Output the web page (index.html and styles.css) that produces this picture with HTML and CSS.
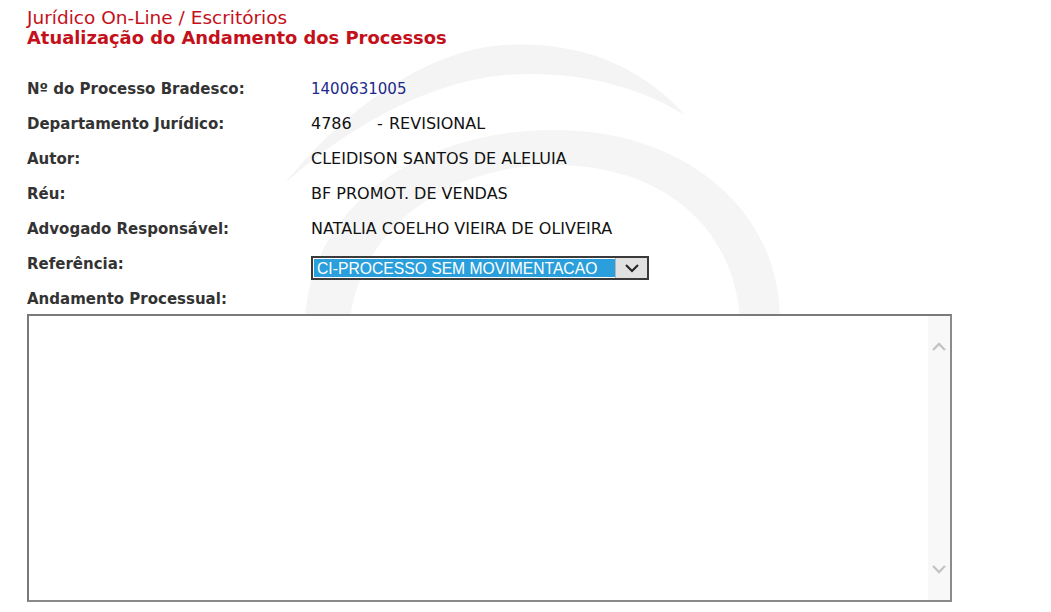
FILE: index.html
```html
<!DOCTYPE html>
<html lang="pt-BR">
<head>
<meta charset="utf-8">
<title>Atualização do Andamento dos Processos</title>
<link rel="stylesheet" href="styles.css">
</head>
<body>
<div class="page">
  <svg class="watermark" width="520" height="300" viewBox="0 0 520 300" aria-hidden="true">
    <path d="M0 153 C 60 80, 140 20, 220 15 C 300 10, 360 40, 400 85 C 350 55, 290 40, 220 45 C 140 52, 60 100, 0 153 Z" fill="#f4f4f4"/>
    <path d="M20 290 C 25 180, 130 100, 270 100 C 400 100, 495 180, 495 290 L 455 290 C 450 200, 380 135, 270 135 C 160 135, 75 200, 65 290 Z" fill="#f5f5f5"/>
  </svg>
  <header class="titles">
    <div class="crumb">Jurídico On-Line / Escritórios</div>
    <h1 class="title">Atualização do Andamento dos Processos</h1>
  </header>
  <div class="form">
    <div class="label">Nº do Processo Bradesco:</div>
    <div class="value value-blue">1400631005</div>
    <div class="label">Departamento Jurídico:</div>
    <div class="value"><span class="code">4786</span><span class="dash">-</span>REVISIONAL</div>
    <div class="label">Autor:</div>
    <div class="value">CLEIDISON SANTOS DE ALELUIA</div>
    <div class="label">Réu:</div>
    <div class="value">BF PROMOT. DE VENDAS</div>
    <div class="label">Advogado Responsável:</div>
    <div class="value">NATALIA COELHO VIEIRA DE OLIVEIRA</div>
    <div class="label">Referência:</div>
    <div class="value">
      <div class="select">
        <span class="select-text">CI-PROCESSO SEM MOVIMENTACAO</span>
        <span class="select-btn">
          <svg width="16" height="10" viewBox="0 0 16 10"><path d="M2 2 L8 8 L14 2" fill="none" stroke="#222" stroke-width="2"/></svg>
        </span>
      </div>
    </div>
    <div class="label label-wide">Andamento Processual:</div>
  </div>
  <div class="textarea">
    <div class="textarea-body"></div>
    <div class="scrollbar">
      <svg width="16" height="10" viewBox="0 0 16 10"><path d="M2 8 L8 2 L14 8" fill="none" stroke="#c4c4c4" stroke-width="2.4"/></svg>
      <svg width="16" height="10" viewBox="0 0 16 10"><path d="M2 2 L8 8 L14 2" fill="none" stroke="#c4c4c4" stroke-width="2.4"/></svg>
    </div>
  </div>
</div>
</body>
</html>
```
FILE: styles.css
```css
html, body {
  margin: 0;
  padding: 0;
  background: #fff;
}
.page {
  position: relative;
  width: 1051px;
  height: 612px;
  overflow: hidden;
  padding: 8px 0 0 27px;
  box-sizing: border-box;
  font-family: "DejaVu Sans", Verdana, sans-serif;
}
.watermark {
  position: absolute;
  left: 285px;
  top: 30px;
  z-index: 0;
}
.titles, .form, .textarea {
  position: relative;
  z-index: 1;
}
.crumb {
  color: #c4101a;
  font-size: 18.5px;
  line-height: 20px;
}
.title {
  margin: 0;
  color: #c4101a;
  font-size: 17.9px;
  font-weight: bold;
  line-height: 20px;
}
.form {
  margin-top: 23px;
  display: grid;
  grid-template-columns: 284px auto;
  grid-auto-rows: 35px;
  align-items: center;
}
.label {
  font-weight: bold;
  font-size: 15px;
  color: #333;
}
.label-wide {
  grid-column: 1 / 3;
}
.value {
  font-size: 16px;
  color: #111;
}
.value-blue {
  color: #1d2a8c;
  font-size: 15px;
}
.code {
  display: inline-block;
  width: 66px;
}
.dash {
  display: inline-block;
  width: 12px;
}
.select {
  display: flex;
  width: 338px;
  height: 24px;
  margin-top: 8px;
  box-sizing: border-box;
  border: 2px solid #3a3a3a;
  background: #fff;
}
.select-text {
  flex: 1;
  background: #2a9fdb;
  color: #fff;
  font-family: "Liberation Sans", Arial, sans-serif;
  font-size: 15.7px;
  line-height: 20px;
  padding-left: 3px;
  margin: 1px 0 1px 1px;
  white-space: nowrap;
  overflow: hidden;
}
.select-btn {
  width: 31px;
  background: #e1e1e1;
  border-left: 1px solid #b5b5b5;
  display: flex;
  align-items: center;
  justify-content: center;
}
.textarea {
  margin-top: -2px;
  width: 925px;
  height: 288px;
  box-sizing: border-box;
  border: 2px solid #7a7a7a;
  border-right-color: #8a8a8a;
  border-bottom-color: #8a8a8a;
  display: flex;
  background: #fff;
}
.textarea-body {
  flex: 1;
}
.scrollbar {
  width: 22px;
  background: #f8f8f8;
  display: flex;
  flex-direction: column;
  justify-content: space-between;
  align-items: center;
  padding: 26px 0 26px;
}
```
